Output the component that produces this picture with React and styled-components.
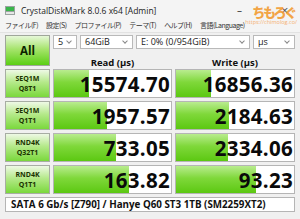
import React from "react";
import styled, { createGlobalStyle } from "styled-components";

const Global = createGlobalStyle`
  html, body { margin: 0; padding: 0; }
  body {
    width: 300px;
    height: 219px;
    overflow: hidden;
    background: #f0f0f0;
    font-family: "Open Sans", "Noto Sans CJK JP", "Noto Sans", sans-serif;
  }
`;

const rows = [
  { a: "SEQ1M", b: "Q8T1", read: "15574.70", write: "16856.36", rw: 35, ww: 35 },
  { a: "SEQ1M", b: "Q1T1", read: "1957.57", write: "2184.63", rw: 53, ww: 53 },
  { a: "RND4K", b: "Q32T1", read: "733.05", write: "2334.06", rw: 62, ww: 52 },
  { a: "RND4K", b: "Q1T1", read: "163.82", write: "93.23", rw: 75, ww: 80 },
];

const menu = ["ファイル(F)", "設定(S)", "プロファイル(P)", "テーマ(T)", "ヘルプ(H)", "言語(Language)"];

export default function App() {
  return (
    <Window>
      <Global />
      <TitleBar>
        <AppIcon viewBox="0 0 10 9">
          <rect x="0" y="0" width="10" height="9" fill="#9aa3a0" />
          <rect x="1" y="1" width="8" height="4" fill="#39b54a" />
          <rect x="1" y="6" width="8" height="2" fill="#e6e6e6" />
        </AppIcon>
        <Title>CrystalDiskMark 8.0.6 x64 [Admin]</Title>
        <Minimize>–</Minimize>
        <Close>×</Close>
        <Watermark>
          <Logo>ちもろぐ</Logo>
          <Url>https://chimolog.co/</Url>
        </Watermark>
      </TitleBar>
      <MenuBar>
        {menu.map((m) => (
          <MenuItem key={m}>{m}</MenuItem>
        ))}
      </MenuBar>
      <Board>
        <AllButton>All</AllButton>
        <Controls>
          <Select $w={24}>5</Select>
          <Select $w={53}>64GiB</Select>
          <Select $w={114}>E: 0% (0/954GiB)</Select>
          <Select $w={42}>µs</Select>
        </Controls>
        <Header>Read (µs)</Header>
        <Header>Write (µs)</Header>
        {rows.map((r) => (
          <React.Fragment key={r.a + r.b}>
            <Label>
              <span>{r.a}</span>
              <span>{r.b}</span>
            </Label>
            <Cell>
              <Bar style={{ width: r.rw }} />
              <Value>{r.read}</Value>
            </Cell>
            <Cell>
              <Bar style={{ width: r.ww }} />
              <Value>{r.write}</Value>
            </Cell>
          </React.Fragment>
        ))}
        <Status>SATA 6 Gb/s [Z790] / Hanye Q60 ST3 1TB (SM2259XT2)</Status>
      </Board>
    </Window>
  );
}

const Window = styled.div`
  width: 300px;
  height: 219px;
  display: flex;
  flex-direction: column;
`;

const TitleBar = styled.div`
  position: relative;
  height: 17px;
  display: flex;
  align-items: center;
  padding-left: 5px;
  background: #f4f4f4;
`;

const AppIcon = styled.svg`
  width: 10px;
  height: 9px;
  margin-right: 6px;
  margin-top: 3px;
`;

const Title = styled.span`
  font-size: 8.5px;
  color: #222;
  font-family: "Open Sans", "Noto Sans", sans-serif;
  padding-top: 4px;
`;

const Minimize = styled.span`
  position: absolute;
  left: 237px;
  top: 3px;
  font-size: 10px;
  color: #333;
`;

const Close = styled.span`
  position: absolute;
  left: 281px;
  top: 1px;
  font-size: 13px;
  color: #555;
`;

const Watermark = styled.div`
  position: absolute;
  left: 237px;
  top: 4px;
  width: 60px;
  display: flex;
  flex-direction: column;
  align-items: flex-end;
  opacity: 0.88;
  white-space: nowrap;
`;

const Logo = styled.span`
  font-family: "Noto Sans CJK JP", sans-serif;
  font-weight: 900;
  font-size: 13px;
  line-height: 15px;
  color: #f29a2e;
  letter-spacing: -2.3px;
  margin-right: 2px;
`;

const Url = styled.span`
  font-size: 5.5px;
  line-height: 6px;
  color: #f4a860;
`;

const MenuBar = styled.div`
  height: 15px;
  display: flex;
  align-items: center;
  gap: 8px;
  padding-left: 5px;
  background: #f4f4f4;
  border-bottom: 1px solid #e2e2e2;
  white-space: nowrap;
`;

const MenuItem = styled.span`
  font-size: 7px;
  letter-spacing: -0.5px;
  color: #333;
  font-family: "Noto Sans CJK JP", sans-serif;
`;

const Board = styled.div`
  display: grid;
  grid-template-columns: 45px 119px 120px;
  grid-template-rows: 14px 14px 29px 29px 29px 29px 15px;
  gap: 3px;
  padding: 2px 5px 0 5px;
`;

const AllButton = styled.div`
  grid-row: 1 / span 2;
  display: flex;
  align-items: center;
  justify-content: center;
  border: 1px solid #9fa69a;
  background: linear-gradient(to bottom, #e6f7d8 0%, #a6e46c 45%, #5bcf14 100%);
  font-weight: 700;
  font-size: 11.5px;
  color: #0b2200;
`;

const Controls = styled.div`
  grid-column: 2 / span 2;
  display: flex;
  gap: 3px;
`;

const Select = styled.div`
  position: relative;
  width: ${(p) => p.$w}px;
  box-sizing: border-box;
  height: 14px;
  border: 1px solid #b9b9b9;
  background: #fff;
  font-size: 9px;
  line-height: 12px;
  padding-left: 4px;
  color: #222;
  white-space: nowrap;
  &::after {
    content: "";
    position: absolute;
    right: 5px;
    top: 3px;
    width: 3px;
    height: 3px;
    border-right: 1px solid #888;
    border-bottom: 1px solid #888;
    transform: rotate(45deg);
  }
`;

const Header = styled.div`
  display: flex;
  align-items: flex-end;
  justify-content: center;
  font-weight: 700;
  font-size: 9.5px;
  line-height: 11px;
  color: #111;
  margin-bottom: -2px;
`;

const Label = styled.div`
  display: flex;
  flex-direction: column;
  align-items: center;
  justify-content: center;
  gap: 1px;
  border: 1px solid #a7ada3;
  background: linear-gradient(to bottom, #eef9e5 0%, #b5e98a 45%, #7ad83c 100%);
  font-weight: 700;
  font-size: 7px;
  line-height: 9px;
  color: #1a3300;
`;

const Cell = styled.div`
  position: relative;
  border: 1px solid #b5b5b5;
  background: #fff;
  display: flex;
  align-items: center;
  justify-content: flex-end;
  overflow: hidden;
`;

const Bar = styled.div`
  position: absolute;
  left: 0;
  top: 0;
  bottom: 0;
  background: linear-gradient(to bottom, #b9ec8f 0%, #7fd83a 45%, #5cc812 100%);
`;

const Value = styled.span`
  position: relative;
  font-weight: 700;
  font-size: 20.5px;
  letter-spacing: 0.3px;
  color: #0a0a0a;
  padding-right: 1px;
`;

const Status = styled.div`
  grid-column: 1 / span 3;
  border: 1px solid #b5b5b5;
  background: #fff;
  font-weight: 700;
  font-size: 9.8px;
  line-height: 13px;
  padding-left: 5px;
  color: #111;
  white-space: nowrap;
`;
